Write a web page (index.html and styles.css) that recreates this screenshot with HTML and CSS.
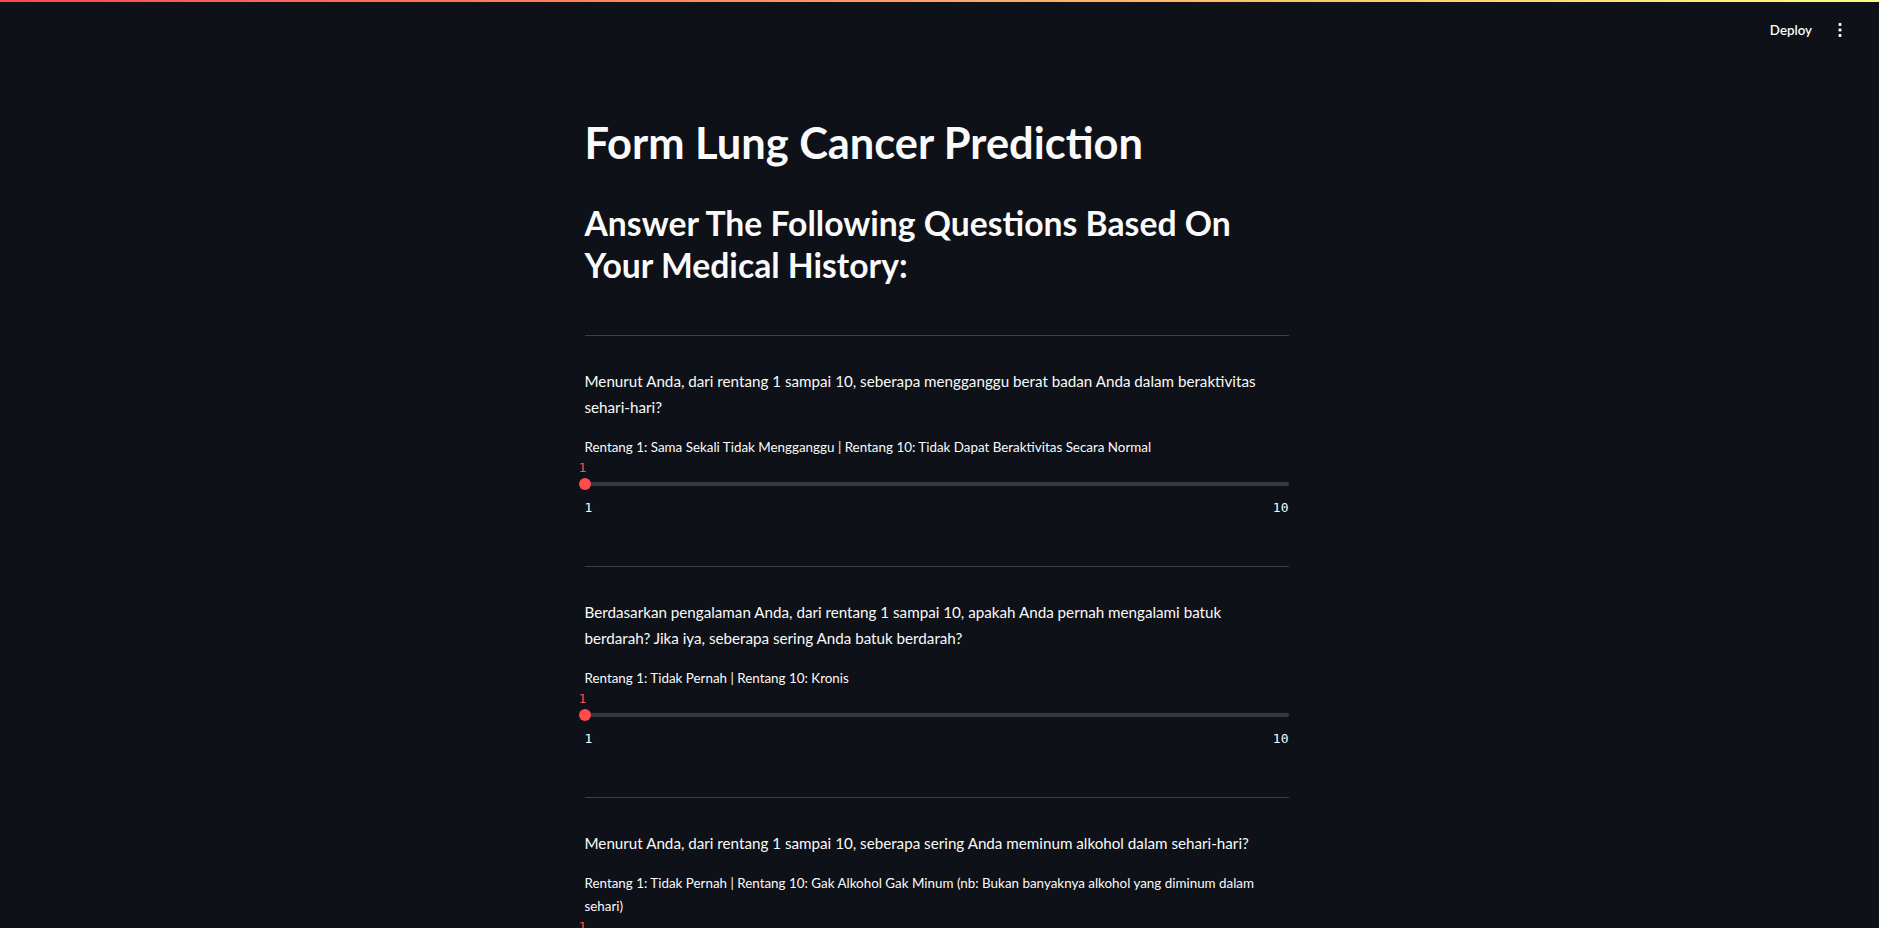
FILE: index.html
```html
<!DOCTYPE html>
<html lang="id">
<head>
<meta charset="utf-8">
<title>Form Lung Cancer Prediction</title>
<link rel="stylesheet" href="styles.css">
</head>
<body>
<div class="decoration"></div>
<header class="header">
  <button class="deploy">Deploy</button>
  <button class="menu" aria-label="Main menu">
    <svg width="24" height="24" viewBox="0 0 24 24"><rect x="10.5" y="5" width="3" height="3" rx="1"/><rect x="10.5" y="10.5" width="3" height="3" rx="1"/><rect x="10.5" y="16" width="3" height="3" rx="1"/></svg>
  </button>
</header>
<main class="main">
  <div class="block">
    <h1 class="title">Form Lung Cancer Prediction</h1>
    <h2 class="subtitle">Answer The Following Questions Based On Your Medical History:</h2>

    <section class="question">
      <hr class="divider">
      <p class="q-text">Menurut Anda, dari rentang 1 sampai 10, seberapa mengganggu berat badan Anda dalam beraktivitas sehari-hari?</p>
      <div class="label">Rentang 1: Sama Sekali Tidak Mengganggu | Rentang 10: Tidak Dapat Beraktivitas Secara Normal</div>
      <div class="slider">
        <div class="value">1</div>
        <div class="track-row"><div class="track"></div><div class="thumb"></div></div>
        <div class="ticks"><span>1</span><span>10</span></div>
      </div>
    </section>

    <section class="question">
      <hr class="divider">
      <p class="q-text">Berdasarkan pengalaman Anda, dari rentang 1 sampai 10, apakah Anda pernah mengalami batuk berdarah? Jika iya, seberapa sering Anda batuk berdarah?</p>
      <div class="label">Rentang 1: Tidak Pernah | Rentang 10: Kronis</div>
      <div class="slider">
        <div class="value">1</div>
        <div class="track-row"><div class="track"></div><div class="thumb"></div></div>
        <div class="ticks"><span>1</span><span>10</span></div>
      </div>
    </section>

    <section class="question">
      <hr class="divider">
      <p class="q-text">Menurut Anda, dari rentang 1 sampai 10, seberapa sering Anda meminum alkohol dalam sehari-hari?</p>
      <div class="label">Rentang 1: Tidak Pernah | Rentang 10: Gak Alkohol Gak Minum (nb: Bukan banyaknya alkohol yang diminum dalam sehari)</div>
      <div class="slider">
        <div class="value">1</div>
        <div class="track-row"><div class="track"></div><div class="thumb"></div></div>
        <div class="ticks"><span>1</span><span>10</span></div>
      </div>
    </section>
  </div>
</main>
</body>
</html>
```
FILE: styles.css
```css
* { box-sizing: border-box; }
html, body { margin: 0; padding: 0; }
body {
  background: #0e1117;
  color: #fafafa;
  font-family: Lato, "Noto Sans", sans-serif;
  overflow: hidden;
  height: 928px;
}
.decoration {
  height: 2px;
  background: linear-gradient(90deg, #ff4b4b, #fffd80);
}
.header {
  height: 58px;
  display: flex;
  justify-content: flex-end;
  align-items: center;
  padding-right: 23px;
  padding-bottom: 2px;
}
.deploy {
  background: transparent;
  border: 0;
  color: #fafafa;
  font-family: inherit;
  font-size: 13.3px;
  font-weight: 600;
  padding: 4px 12px;
  cursor: pointer;
}
.menu {
  background: transparent;
  border: 0;
  width: 32px;
  height: 32px;
  display: flex;
  align-items: center;
  justify-content: center;
  padding: 0;
  fill: #fafafa;
}
.main { padding-right: 6px; }
.block {
  width: 704px;
  margin: 0 auto;
}
.title {
  margin: 56px 0 0;
  font-size: 43.4px;
  font-weight: 700;
  line-height: 53px;
}
.subtitle {
  margin: 33px 0 0;
  font-size: 33.7px;
  font-weight: 700;
  line-height: 42px;
}
.divider {
  margin: 0;
  border: 0;
  height: 1px;
  background: rgba(250, 250, 250, 0.2);
}
.question:first-of-type .divider { margin-top: 49px; }
.q-text {
  margin: 32px 0 0;
  font-size: 15.2px;
  line-height: 26px;
}
.label {
  margin-top: 16px;
  font-size: 13.4px;
  line-height: 23px;
}
.slider { padding-bottom: 48px; }
.value {
  height: 17px;
  line-height: 17px;
  font-family: "DejaVu Sans Mono", "Liberation Mono", monospace;
  font-size: 13px;
  color: #ff4b4b;
  margin-left: -6px;
}
.track-row {
  position: relative;
  height: 16px;
  display: flex;
  align-items: center;
}
.track {
  flex: 1;
  height: 4px;
  border-radius: 2px;
  background: rgba(172, 177, 195, 0.25);
}
.thumb {
  position: absolute;
  left: -6px;
  top: 2px;
  width: 12px;
  height: 12px;
  border-radius: 50%;
  background: #ff4b4b;
}
.ticks {
  margin-top: 4px;
  height: 22px;
  display: flex;
  justify-content: space-between;
  align-items: center;
  font-family: "DejaVu Sans Mono", "Liberation Mono", monospace;
  font-size: 13px;
}
```
